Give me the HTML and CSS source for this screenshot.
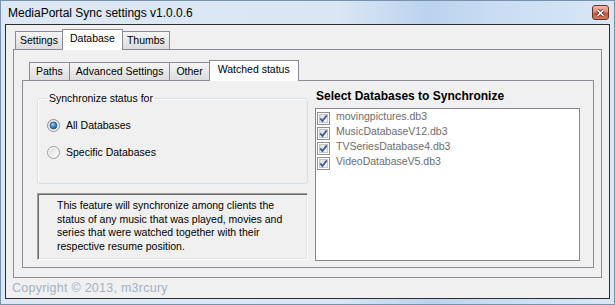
FILE: index.html
```html
<!DOCTYPE html>
<html lang="en">
<head>
  <meta charset="UTF-8">
  <title>MediaPortal Sync settings</title>
  <link rel="stylesheet" href="styles.css">
</head>
<body>
  <!-- shared glyphs for radios / checkboxes -->
  <svg class="sprite" width="0" height="0">
    <defs>
      <linearGradient id="box-bg" x1="0" y1="0" x2="1" y2="1">
        <stop offset="0" stop-color="#d9dde3"/>
        <stop offset="1" stop-color="#fbfbfb"/>
      </linearGradient>
      <radialGradient id="dot-bg" cx="0.4" cy="0.35" r="0.7">
        <stop offset="0" stop-color="#a8dbff"/>
        <stop offset="0.5" stop-color="#3a8ad0"/>
        <stop offset="1" stop-color="#134f8c"/>
      </radialGradient>
      <symbol id="radio-on" viewBox="0 0 13 13">
        <circle cx="6.5" cy="6.5" r="6" fill="url(#box-bg)" stroke="#8e8f8f"/>
        <circle cx="6.5" cy="6.5" r="3.4" fill="url(#dot-bg)" stroke="#1f4f80" stroke-width="0.8"/>
      </symbol>
      <symbol id="radio-off" viewBox="0 0 13 13">
        <circle cx="6.5" cy="6.5" r="6" fill="#f4f4f4" stroke="#9a9b9b"/>
        <circle cx="6.5" cy="6.5" r="4.2" fill="url(#box-bg)"/>
      </symbol>
      <symbol id="check-on" viewBox="0 0 13 13">
        <rect x="0.5" y="0.5" width="12" height="12" fill="#fff" stroke="#8e8f8f"/>
        <rect x="2.5" y="2.5" width="8" height="8" fill="url(#box-bg)" stroke="#c3c8d0"/>
        <path d="M3.2 6.4 L5.4 9 L9.8 3.4" fill="none" stroke="#3c5c9c" stroke-width="1.8"/>
      </symbol>
    </defs>
  </svg>

  <div class="window">
    <div class="titlebar">
      <span class="title">MediaPortal Sync settings v1.0.0.6</span>
      <span class="close-btn">
        <svg width="9" height="8" viewBox="0 0 9 8">
          <path d="M1.5 1.2 L7.5 6.8 M7.5 1.2 L1.5 6.8" stroke="#5a1a10" stroke-width="3.2"/>
          <path d="M1.5 1.2 L7.5 6.8 M7.5 1.2 L1.5 6.8" stroke="#fff" stroke-width="1.6"/>
        </svg>
      </span>
    </div>

    <div class="client">
      <div class="tabstrip outer-strip">
        <span class="tab">Settings</span>
        <span class="tab active">Database</span>
        <span class="tab">Thumbs</span>
      </div>
      <div class="tabpage outer-page">
        <div class="tabstrip inner-strip">
          <span class="tab">Paths</span>
          <span class="tab">Advanced Settings</span>
          <span class="tab">Other</span>
          <span class="tab active">Watched status</span>
        </div>
        <div class="tabpage inner-page">
          <div class="left-col">
            <fieldset class="groupbox">
              <legend>Synchronize status for</legend>
              <label class="radio-row">
                <svg class="radio" width="13" height="13"><use href="#radio-on"/></svg>
                All Databases
              </label>
              <label class="radio-row">
                <svg class="radio" width="13" height="13"><use href="#radio-off"/></svg>
                Specific Databases
              </label>
            </fieldset>
            <div class="infobox">
              This feature will synchronize among clients the<br>
              status of any music that was played, movies and<br>
              series that were watched together with their<br>
              respective resume position.
            </div>
          </div>
          <div class="right-col">
            <div class="list-title">Select Databases to Synchronize</div>
            <div class="listbox">
              <div class="list-item"><svg width="13" height="13"><use href="#check-on"/></svg>movingpictures.db3</div>
              <div class="list-item"><svg width="13" height="13"><use href="#check-on"/></svg>MusicDatabaseV12.db3</div>
              <div class="list-item"><svg width="13" height="13"><use href="#check-on"/></svg>TVSeriesDatabase4.db3</div>
              <div class="list-item"><svg width="13" height="13"><use href="#check-on"/></svg>VideoDatabaseV5.db3</div>
            </div>
          </div>
        </div>
      </div>
      <div class="copyright">Copyright © 2013, m3rcury</div>
    </div>
  </div>
</body>
</html>
```

FILE: styles.css
```css
html, body { margin:0; padding:0; background:#fff; }
.sprite { display:block; width:0; height:0; overflow:hidden; }

/* Window frame */
.window {
  width:615px; height:305px; box-sizing:border-box;
  border:1px solid #7891ad;
  background: linear-gradient(90deg, #dde8f4 0%, #d9e6f4 55%, #bad3ee 70%, #c8dcf2 80%, #d9e7f7 100%);
  display:flex; flex-direction:column;
  font-family:"Liberation Sans", Arial, sans-serif;
}
.titlebar {
  height:23px; box-sizing:border-box;
  display:flex; align-items:flex-start; justify-content:space-between;
  padding:4px 5px 0 7px;
}
.title { font-size:12px; line-height:17px; color:#000; }
.close-btn {
  width:17px; height:15px; box-sizing:border-box;
  border:1px solid #6e3328; border-radius:3px;
  background: linear-gradient(#f0b8a8, #dd907b 45%, #c6543a 55%, #d67a62);
  display:flex; align-items:center; justify-content:center;
}

/* Client area */
.client {
  flex:1;
  margin:0 4px 5px 4px;
  border:1px solid #2e2e2e;
  background:#f0f0f0;
  font-size:10.5px; color:#000;
  display:flex; flex-direction:column;
}

/* Tabs */
.tabstrip { display:flex; align-items:flex-end; height:20px; }
.tab {
  height:18px; box-sizing:border-box;
  border:1px solid #898c95; border-bottom:none;
  background:linear-gradient(#f6f6f6, #e6e6e6 60%, #dcdcdc);
  padding:0 4px; line-height:17px;
  margin-left:-1px; white-space:nowrap;
}
.tab:first-child { margin-left:0; }
.tab.active {
  height:21px; margin-bottom:-1px;
  background:#fff; padding:0 7px; line-height:16px;
  position:relative; z-index:1;
}
.inner-strip .tab { padding:0 6px; }
.inner-strip .tab.active { padding:0 8px; }
.tabpage { border:1px solid #898c95; background:#f0f0f0; }

.outer-strip { margin:4px 0 0 9px; }
.outer-page {
  height:229px; box-sizing:border-box;
  margin:0 7px 0 7px;
  display:flex; flex-direction:column;
}
.inner-strip { margin:10px 0 0 15px; }
.inner-page {
  flex:1; margin:0 7px 9px 8px;
  display:grid; grid-template-columns:271px 265px; column-gap:7px;
  padding:8px 0 0 14px;
  align-items:start;
}

/* Left column */
.groupbox {
  margin:3px 0 0 0; padding:0 0 23px 9px;
  border:1px solid #d5dfe5; border-radius:3px;
  box-shadow: inset 1px 1px #fff;
}
.groupbox legend { padding:0 2px; line-height:13px; }
.radio-row { display:flex; align-items:center; gap:6px; height:16px; line-height:16px; }
.radio-row:first-of-type { margin-top:12px; }
.radio-row + .radio-row { margin-top:11px; }
.radio { flex:none; }

.infobox {
  margin-top:9px; height:67px; box-sizing:border-box;
  border:1px solid; border-color:#a0a0a0 #fff #fff #a0a0a0;
  box-shadow: inset 1px 1px #696969, inset -1px -1px #e3e3e3;
  padding:5px 0 0 19px; line-height:13.7px;
}

/* Right column */
.list-title { font-weight:bold; font-size:12px; line-height:14px; margin-bottom:5px; padding-left:1px; }
.listbox {
  height:153px; box-sizing:border-box;
  border:1px solid #828790; background:#fff;
}
.list-item { display:flex; align-items:flex-start; gap:6px; height:15px; line-height:15px; color:#6d6d6d; padding-left:1px; }
.list-item svg { margin-top:3px; flex:none; }

.copyright { padding:3px 0 0 6px; line-height:14px; font-size:12.5px; letter-spacing:0.25px; color:#a3b1c4; }
```
